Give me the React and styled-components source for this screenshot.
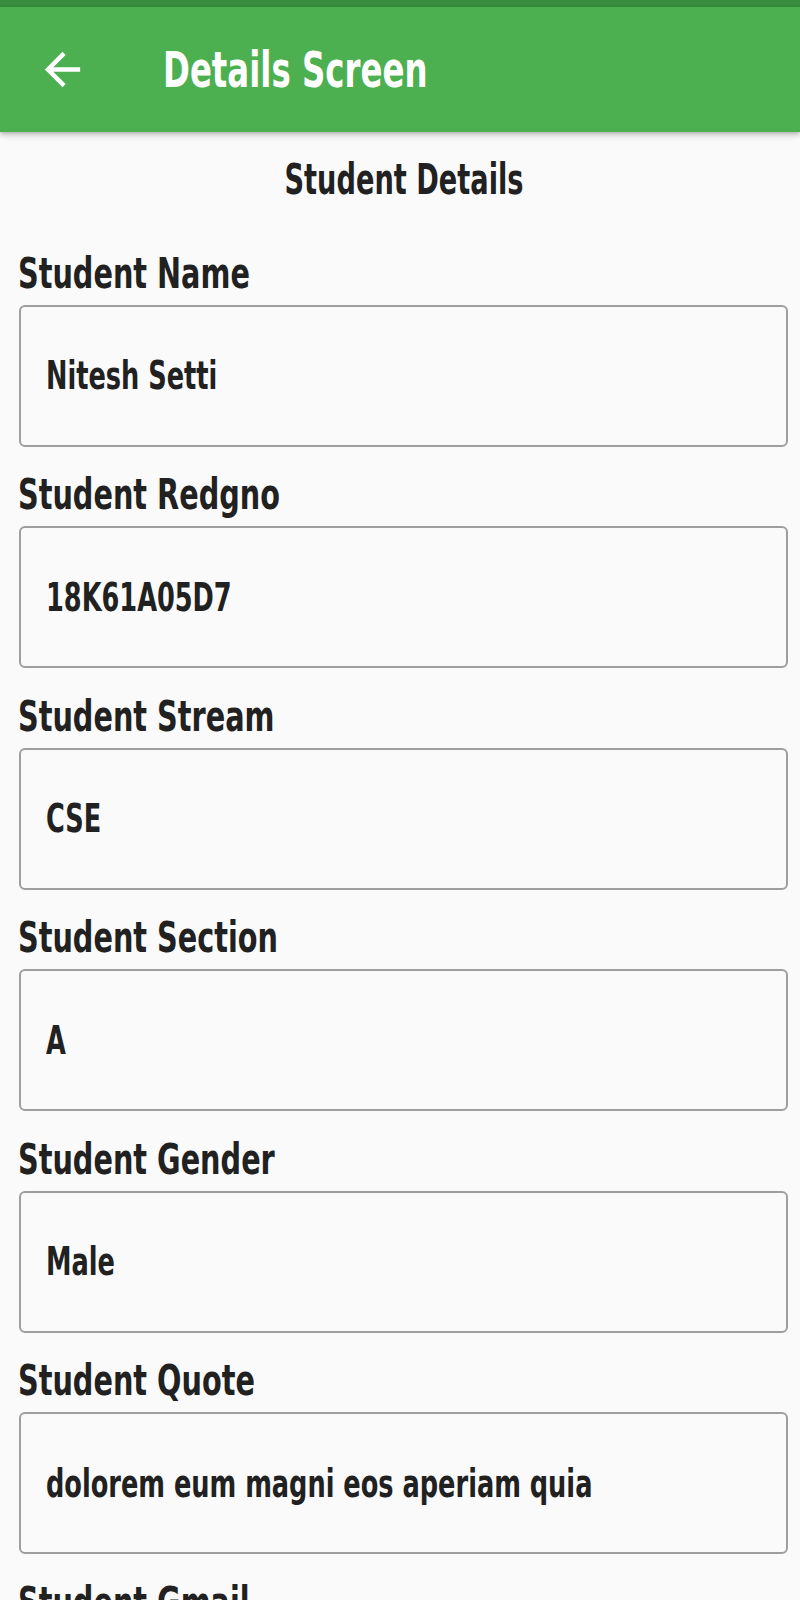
import React from "react";
import styled, { createGlobalStyle } from "styled-components";

const Global = createGlobalStyle`
  html, body { margin: 0; padding: 0; background: #fafafa; }
  body { font-family: "Liberation Sans Narrow", "DejaVu Sans Condensed", "Liberation Sans", sans-serif; overflow: hidden; }
  * { box-sizing: border-box; }
`;

const Screen = styled.div`
  width: 800px;
  height: 1600px;
  overflow: hidden;
  background: #fafafa;
  display: flex;
  flex-direction: column;
`;

const StatusBar = styled.div`
  height: 7px;
  background: #388e3c;
  flex-shrink: 0;
`;

const AppBar = styled.header`
  height: 125px;
  flex-shrink: 0;
  background: #4caf50;
  display: flex;
  align-items: center;
  padding-left: 36px;
  box-shadow: 0 3px 6px rgba(0, 0, 0, 0.22), 0 1px 3px rgba(0, 0, 0, 0.12);
  position: relative;
  z-index: 1;
`;

const BackIcon = styled.svg`
  width: 53px;
  height: 53px;
  fill: #ffffff;
  flex-shrink: 0;
`;

/* condensed face: the installed condensed font is wider than the reference's, so narrow it */
const Condensed = styled.span`
  display: inline-block;
  white-space: nowrap;
  transform: scaleX(${(p) => p.$scale || 0.76});
  transform-origin: ${(p) => p.$origin || "left"} center;
`;

const Title = styled.h1`
  margin: 0 0 0 74px;
  color: #ffffff;
  font-size: 50px;
  font-weight: 700;
  line-height: 1;
`;

const Content = styled.main`
  padding: 0 12px 0 19px;
  display: flex;
  flex-direction: column;
`;

const Heading = styled.h2`
  margin: 23.5px 0 46px;
  text-align: center;
  color: #212121;
  font-size: 42px;
  line-height: 48px;
  font-weight: 700;
`;

const Field = styled.section`
  display: flex;
  flex-direction: column;
  gap: 7px;
  margin-bottom: 24.6px;
  flex-shrink: 0;
`;

const Label = styled.label`
  color: #212121;
  font-size: 42px;
  line-height: 48px;
  font-weight: 700;
  margin-left: -1px;
`;

const ValueBox = styled.div`
  height: 142px;
  border: 2px solid #9e9e9e;
  border-radius: 6px;
  display: flex;
  align-items: center;
  padding-left: 25px;
  color: #212121;
  font-size: 39px;
  line-height: 1;
  font-weight: 700;
`;

const fields = [
  ["Student Name", "Nitesh Setti"],
  ["Student Redgno", "18K61A05D7"],
  ["Student Stream", "CSE"],
  ["Student Section", "A"],
  ["Student Gender", "Male"],
  ["Student Quote", "dolorem eum magni eos aperiam quia"],
  ["Student Gmail", "niteshsetti@gmail.com"],
];

export default function App() {
  return (
    <>
      <Global />
      <Screen>
        <StatusBar />
        <AppBar>
          <BackIcon viewBox="0 0 24 24">
            <path d="M20 11H7.83l5.59-5.59L12 4l-8 8 8 8 1.41-1.41L7.83 13H20v-2z" />
          </BackIcon>
          <Title>
            <Condensed $scale={0.72}>Details Screen</Condensed>
          </Title>
        </AppBar>
        <Content>
          <Heading>
            <Condensed $scale={0.72} $origin="center">
              Student Details
            </Condensed>
          </Heading>
          {fields.map(([label, value]) => (
            <Field key={label}>
              <Label>
                <Condensed $scale={0.76}>{label}</Condensed>
              </Label>
              <ValueBox>
                <Condensed $scale={0.73}>{value}</Condensed>
              </ValueBox>
            </Field>
          ))}
        </Content>
      </Screen>
    </>
  );
}
